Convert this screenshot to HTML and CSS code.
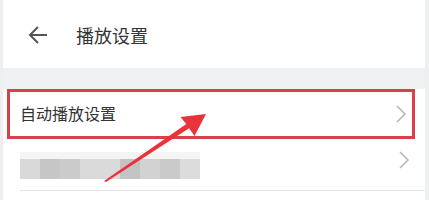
FILE: index.html
```html
<!DOCTYPE html>
<html lang="zh-CN">
<head>
  <meta charset="UTF-8">
  <title>播放设置</title>
  <link rel="stylesheet" href="styles.css">
</head>
<body>
<div class="page">
  <div class="header">
    <svg class="back-icon" width="20" height="20" viewBox="0 0 20 20">
      <path d="M2 10 H19 M10 2 L2 10 L10 18" fill="none" stroke="#555" stroke-width="2"/>
    </svg>
    <span class="header-title">播放设置</span>
  </div>

  <div class="gap"></div>

  <div class="list">
    <div class="row row-marked">
      <span class="row-text">自动播放设置</span>
      <svg class="chevron" width="10" height="18" viewBox="0 0 10 18">
        <path d="M1 1 L9 9 L1 17" fill="none" stroke="#b3b3b3" stroke-width="1.5"/>
      </svg>
    </div>
    <div class="row row-second">
      <div class="blur">
        <span class="b1"></span><span class="b2"></span><span class="b3"></span><span class="b4"></span>
        <span class="b5"></span><span class="b6"></span><span class="b7"></span><span class="b8"></span>
      </div>
      <svg class="chevron" width="10" height="18" viewBox="0 0 10 18">
        <path d="M1 1 L9 9 L1 17" fill="none" stroke="#b3b3b3" stroke-width="1.5"/>
      </svg>
    </div>
  </div>

  <svg class="pointer" width="429" height="200" viewBox="0 0 429 200">
    <polygon points="104,181 186.3,124.1 180.5,117 206,114 194.5,136 189.1,128.3 106,182" fill="#e8333a"/>
  </svg>
</div>
</body>
</html>
```

FILE: styles.css
```css
body {
  margin: 0;
  background: #fff;
  font-family: "Noto Sans CJK SC", "Noto Sans", sans-serif;
  color: #333;
}

.page {
  position: relative;
  width: 422px;
  height: 200px;
  border-left: 3px solid #eeeff1;
  border-right: 4px solid #eeeff1;
  overflow: hidden;
}

.header {
  height: 68px;
  display: flex;
  align-items: center;
  padding-left: 25px;
  padding-top: 1px;
  box-sizing: border-box;
}

.back-icon {
  margin-right: 28px;
}

.header-title {
  font-size: 18px;
  line-height: 20px;
}

.gap {
  height: 21px;
  background: #eff0f2;
}

.row {
  display: flex;
  align-items: center;
  justify-content: space-between;
}

.row-marked {
  margin-left: 4px;
  width: 408px;
  height: 50px;
  box-sizing: border-box;
  border: 3px solid #d9414a;
  padding: 0 6px 0 10px;
}

.row-text {
  font-size: 16px;
  line-height: 20px;
  margin-top: -2px;
}

.row-second {
  height: 51px;
  margin-left: 17px;
  padding-right: 16px;
  border-bottom: 1px solid #e6e6e6;
}

.row-second .chevron {
  margin-top: -10px;
}

.blur {
  display: flex;
  height: 20px;
  margin-top: 9px;
  box-shadow: 0 -7px 0 #f4f4f4;
}

.blur span {
  width: 20px;
}

.b1 { background: #d9d9d9; }
.b2 { background: #c6c6c6; }
.b3 { background: #cbcbcb; }
.b4 { background: #dadada; width: 40px !important; }
.b5 { background: #c3c3c3; }
.b6 { background: #d2d2d2; }
.b7 { background: #cacaca; }
.b8 { background: #dcdcdc; }

.pointer {
  position: absolute;
  left: -3px;
  top: 0;
}
```
